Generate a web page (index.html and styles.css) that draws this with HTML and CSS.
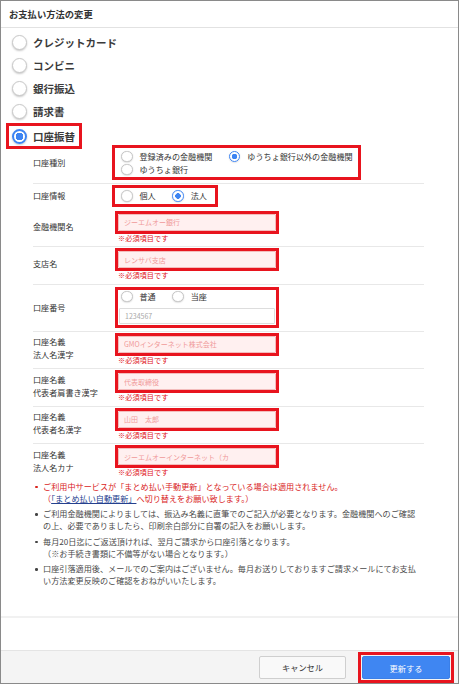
FILE: index.html
```html
<!DOCTYPE html>
<html lang="ja">
<head>
  <meta charset="UTF-8">
  <meta name="viewport" content="width=device-width, initial-scale=1.0">
  <title>お支払い方法の変更</title>
  <link rel="stylesheet" href="styles.css">
</head>
<body>
  <div class="modal">
    <div class="modal-head">お支払い方法の変更</div>

    <div class="modal-body">
      <div class="methods">
        <label class="method"><input type="radio" name="method" class="radio lg">クレジットカード</label>
        <label class="method"><input type="radio" name="method" class="radio lg">コンビニ</label>
        <label class="method"><input type="radio" name="method" class="radio lg">銀行振込</label>
        <label class="method"><input type="radio" name="method" class="radio lg">請求書</label>
        <label class="method marked"><input type="radio" name="method" class="radio lg" checked>口座振替</label>
      </div>

      <div class="form">
        <div class="row first">
          <div class="label">口座種別</div>
          <div class="field">
            <div class="mark choices kind">
              <div class="line">
                <label class="opt"><input type="radio" name="kind" class="radio">登録済みの金融機関</label>
                <label class="opt"><input type="radio" name="kind" class="radio" checked>ゆうちょ銀行以外の金融機関</label>
              </div>
              <div class="line">
                <label class="opt"><input type="radio" name="kind" class="radio">ゆうちょ銀行</label>
              </div>
            </div>
          </div>
        </div>

        <div class="row second">
          <div class="label">口座情報</div>
          <div class="field">
            <div class="mark choices owner">
              <div class="line">
                <label class="opt"><input type="radio" name="owner" class="radio">個人</label>
                <label class="opt"><input type="radio" name="owner" class="radio" checked>法人</label>
              </div>
            </div>
          </div>
        </div>

        <div class="row plain">
          <div class="label">金融機関名</div>
          <div class="field">
            <div class="mark box"><input type="text" class="text err" placeholder="ジーエムオー銀行"></div>
            <div class="error">※必須項目です</div>
          </div>
        </div>

        <div class="row">
          <div class="label">支店名</div>
          <div class="field">
            <div class="mark box"><input type="text" class="text err" placeholder="レンサバ支店"></div>
            <div class="error">※必須項目です</div>
          </div>
        </div>

        <div class="row number">
          <div class="label">口座番号</div>
          <div class="field">
            <div class="mark box tall">
              <div class="line">
                <label class="opt"><input type="radio" name="type" class="radio">普通</label>
                <label class="opt"><input type="radio" name="type" class="radio">当座</label>
              </div>
              <input type="text" class="text" placeholder="1234567">
            </div>
          </div>
        </div>

        <div class="row">
          <div class="label">口座名義<br>法人名漢字</div>
          <div class="field">
            <div class="mark box"><input type="text" class="text err" placeholder="GMOインターネット株式会社"></div>
            <div class="error">※必須項目です</div>
          </div>
        </div>

        <div class="row">
          <div class="label">口座名義<br>代表者肩書き漢字</div>
          <div class="field">
            <div class="mark box"><input type="text" class="text err" placeholder="代表取締役"></div>
            <div class="error">※必須項目です</div>
          </div>
        </div>

        <div class="row">
          <div class="label">口座名義<br>代表者名漢字</div>
          <div class="field">
            <div class="mark box"><input type="text" class="text err" placeholder="山田　太郎"></div>
            <div class="error">※必須項目です</div>
          </div>
        </div>

        <div class="row">
          <div class="label">口座名義<br>法人名カナ</div>
          <div class="field">
            <div class="mark box"><input type="text" class="text err" placeholder="ジーエムオーインターネット（カ"></div>
            <div class="error">※必須項目です</div>
          </div>
        </div>
      </div>

      <ul class="notes">
        <li class="warn">ご利用中サービスが「まとめ払い手動更新」となっている場合は適用されません。<br>（<a href="#">「まとめ払い自動更新」</a>へ切り替えをお願い致します。）</li>
        <li>ご利用金融機関によりましては、振込み名義に直筆でのご記入が必要となります。金融機関へのご確認の上、必要でありましたら、印刷余白部分に自署の記入をお願いします。</li>
        <li>毎月20日迄にご返送頂ければ、翌月ご請求から口座引落となります。<br>（※お手続き書類に不備等がない場合となります。）</li>
        <li>口座引落適用後、メールでのご案内はございません。毎月お送りしておりますご請求メールにてお支払い方法変更反映のご確認をおねがいいたします。</li>
      </ul>
    </div>

    <div class="modal-gap"></div>

    <div class="modal-foot">
      <button class="btn cancel">キャンセル</button>
      <span class="mark submit-mark"><button class="btn submit">更新する</button></span>
    </div>
  </div>
</body>
</html>
```

FILE: styles.css
```css
* {
  box-sizing: border-box;
}
body {
  margin: 0;
  font-family: "Noto Sans CJK JP", "Noto Sans", sans-serif;
  color: #333;
  background: #fff;
}
.modal {
  width: 459px;
  height: 684px;
  border: 1px solid #8a8a8a;
  display: flex;
  flex-direction: column;
  overflow: hidden;
}
.modal-head {
  height: 27px;
  flex: none;
  border-bottom: 1px solid #e2e2e2;
  padding-left: 8px;
  font-size: 9.3px;
  font-weight: bold;
  line-height: 26px;
}
.modal-body {
  height: 590px;
  flex: none;
  padding: 2.5px 0 0 11px;
  border-bottom: 2px solid #f1f1f1;
}
.modal-gap {
  flex: 1;
}
.modal-foot {
  height: 33px;
  flex: none;
  background: #f4f4f4;
  border-top: 1px solid #e4e4e4;
  display: flex;
  justify-content: flex-end;
  align-items: center;
  gap: 12px;
  padding-right: 4px;
}

/* red annotation frame */
.mark {
  border: 3px solid #e8141e;
}

/* radios */
.radio {
  appearance: none;
  -webkit-appearance: none;
  margin: 0;
  flex: none;
  width: 11.5px;
  height: 11.5px;
  border-radius: 50%;
  border: 1px solid #c6c6c6;
  background: #fff;
  box-shadow: 0 0.5px 1.5px rgba(0, 0, 0, 0.18);
}
.radio:checked {
  border: 1.5px solid #3d84f2;
  background: radial-gradient(circle, #3d84f2 0 2.6px, #fff 3px);
}
.radio.lg {
  width: 15px;
  height: 15px;
  border-color: #c9c9c9;
  box-shadow: 0 1px 2px rgba(0, 0, 0, 0.22);
}
.radio.lg:checked {
  border: 2px solid #3d84f2;
  background: radial-gradient(circle, #3d84f2 0 3.6px, #fff 4px);
}

/* payment methods */
.method {
  display: flex;
  align-items: center;
  gap: 6px;
  height: 23.2px;
  font-size: 10.5px;
  font-weight: bold;
  color: #3a3a3a;
}
.method.marked {
  width: fit-content;
  height: 26px;
  margin-left: -6px;
  margin-bottom: -4.3px;
  padding: 0 4px 0 3px;
  border: 3px solid #e8141e;
}

/* form rows */
.form {
  margin-left: 21px;
  width: 391px;
  font-size: 8.1px;
}
.row {
  display: flex;
  align-items: center;
  border-top: 1px solid #e8e8e8;
  padding: 1px 0 4.5px;
}
.row.first {
  border-top: none;
  padding: 0 0 3px;
}
.row.second {
  padding: 1px 0 2px;
}
.row.plain {
  border-top: none;
  padding-top: 2px;
}
.row.number {
  padding: 2px 0 3px;
}
.label {
  width: 80px;
  flex: none;
  line-height: 13px;
}
.field {
  flex: 1;
}
.line {
  display: flex;
  align-items: center;
}
.opt {
  display: flex;
  align-items: center;
  gap: 7px;
  margin-right: 16.5px;
  white-space: nowrap;
}
.choices .line {
  height: 13px;
}
.kind {
  margin-left: -1px;
  width: 249px;
  padding: 2px 0 1px 6px;
}
.owner {
  margin-left: -1px;
  width: fit-content;
  padding: 0 0 0 6px;
}
.owner .line {
  height: 16px;
}
.owner .opt:last-child {
  margin-right: 8px;
}
.box {
  margin-left: 2px;
  width: 164px;
}
.text {
  display: block;
  width: 100%;
  height: 17px;
  margin: 0;
  padding: 0 0 0 5px;
  border: 1px solid #ddd;
  border-radius: 1px;
  font-family: inherit;
  font-size: 7px;
  background: #fff;
  outline: none;
}
.text::placeholder {
  color: #a9a9a9;
}
.text.err {
  background: #fff0f0;
  border-color: #f3bcbc;
}
.text.err::placeholder {
  color: #f09a9a;
}
.box.tall {
  padding: 0 1px 1px;
}
.box.tall .line {
  height: 13px;
  padding-left: 2px;
}
.box.tall .text {
  height: 16px;
  margin-top: 5px;
}
.error {
  margin-left: 5px;
  font-size: 7.2px;
  line-height: 8px;
  color: #e0141e;
}

/* notes */
.notes {
  list-style: none;
  margin: 0 0 0 21px;
  padding: 0;
  width: 389px;
  font-size: 8.15px;
  line-height: 12px;
  color: #4a4a4a;
}
.notes li {
  position: relative;
  padding-left: 10px;
  margin-bottom: 3.5px;
}
.notes li::before {
  content: "";
  position: absolute;
  left: 2px;
  top: 5px;
  width: 2.5px;
  height: 2.5px;
  border-radius: 50%;
  background: #444;
}
.notes li.warn {
  color: #d9231d;
}
.notes li.warn::before {
  background: #d9231d;
}
.notes a {
  color: #24408e;
  text-decoration: underline;
}

/* footer buttons */
.btn {
  height: 23px;
  margin: 0;
  padding: 0;
  font-family: inherit;
  font-size: 8.2px;
  border-radius: 2px;
  cursor: pointer;
}
.cancel {
  width: 87px;
  background: #f9f9f9;
  border: 1px solid #cfcfcf;
  color: #333;
}
.submit-mark {
  display: flex;
  padding: 1px;
  height: 31px;
  margin-top: 1px;
}
.submit {
  width: 88px;
  background: #3f86f2;
  border: 1px solid #3a7fe8;
  color: #fff;
}
```
